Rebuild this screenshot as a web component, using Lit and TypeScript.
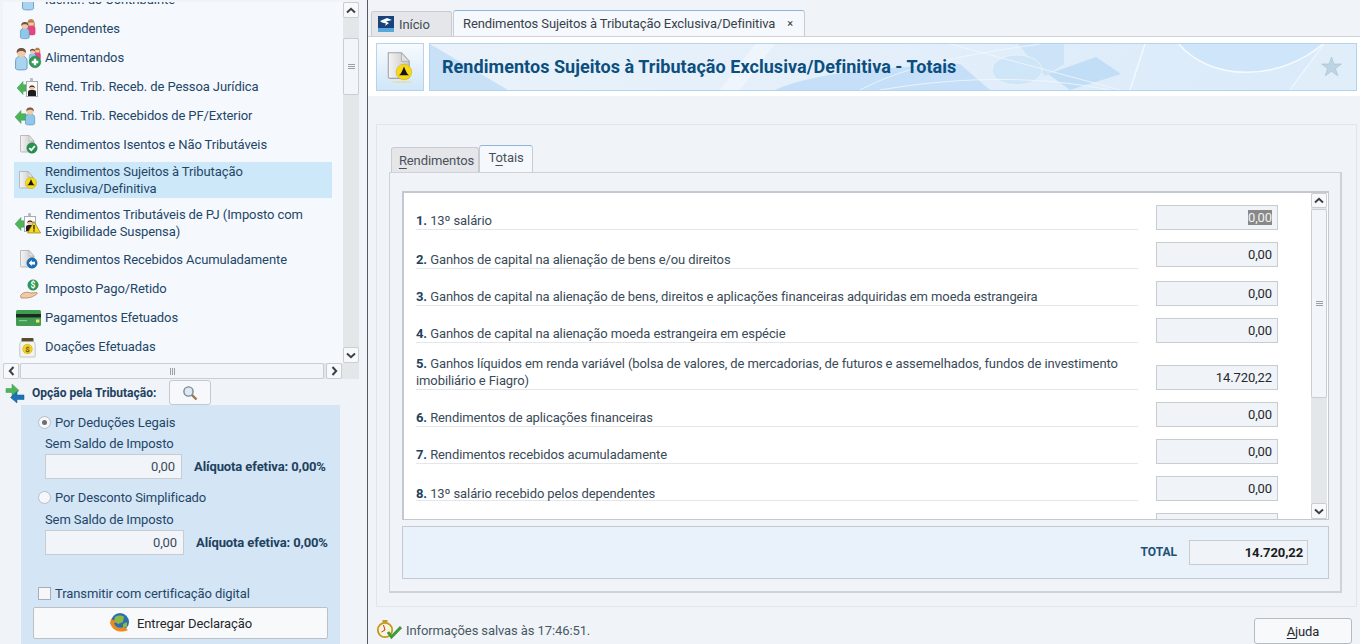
import { LitElement, html, css, svg } from "lit";
import { customElement } from "lit/decorators.js";

// --- small icon parts ---
const person = (x: number, y: number, s: number, shirt: string, hair: string) => svg`
  <g transform="translate(${x} ${y}) scale(${s})">
    <path d="M0.5 18V11.5C0.5 8.5 3 7.5 5.5 7.5S10.5 8.5 10.5 11.5V18C10.5 19 9.5 19.5 5.5 19.5S0.5 19 0.5 18Z" fill=${shirt} stroke="#4a7ea6" stroke-width=".6"/>
    <circle cx="5.5" cy="4.6" r="3.8" fill="#f3c9a5"/>
    <path d="M1.6 5C1 1.8 3 .5 5.5 .5S10 1.8 9.4 5C8.6 3.4 7 3 5.5 3S2.4 3.4 1.6 5Z" fill=${hair}/>
  </g>`;

const woman = (x: number, y: number, s: number) => svg`
  <g transform="translate(${x} ${y}) scale(${s})">
    <path d="M.5 18V11.5C.5 8.5 3 7.5 5.5 7.5S10.5 8.5 10.5 11.5V18C10.5 19 9.5 19.5 5.5 19.5S.5 19 .5 18Z" fill="#e8457f" stroke="#b53a68" stroke-width=".5"/>
    <path d="M1 9C.4 2.5 2.6 .3 5.5 .3S10.6 2.5 10 9H8.4V4H2.6V9Z" fill="#b5763f"/>
    <circle cx="5.5" cy="4.8" r="3.2" fill="#f3c9a5"/>
    <path d="M2.2 4.6C2.6 2 4 1.4 5.5 1.4S8.4 2 8.8 4.6C7 4 4 4 2.2 4.6Z" fill="#b5763f"/>
  </g>`;

const greenArrow = (x: number, y: number, w: number) => svg`
  <path d="M${x} ${y}L${x + 6} ${y - 6.5}V${y - 3.2}H${x + w}V${y + 3.2}H${x + 6}V${y + 6.5}Z" fill="#4fb35b" stroke="#3f9a4b" stroke-width=".5"/>`;

const badge = (x: number, y: number) => svg`
  <rect x=${x + 4} y=${y} width="3" height="5" rx="1" fill="#b9bdc2"/>
  <rect x=${x + .5} y=${y + 3.5} width="11" height="15" fill="#fbfbfb" stroke="#a8acb0"/>
  <path d="M${x + 2} ${y + 18}V${y + 14}C${x + 2} ${y + 12} ${x + 4} ${y + 12} ${x + 6} ${y + 12}S${x + 10} ${y + 12} ${x + 10} ${y + 14}V${y + 18}Z" fill="#1b1b1b"/>
  <circle cx=${x + 6} cy=${y + 9.5} r="2.6" fill="#f0c6a2"/>
  <path d="M${x + 3.2} ${y + 10}C${x + 2.8} ${y + 6.5} ${x + 9.2} ${y + 6.5} ${x + 8.8} ${y + 10}C${x + 7.6} ${y + 8.4} ${x + 4.4} ${y + 8.4} ${x + 3.2} ${y + 10}Z" fill="#1b1b1b"/>`;

const doc = (x: number, y: number, s = 1) => svg`
  <g transform="translate(${x} ${y}) scale(${s})">
    <defs><linearGradient id="docfill" x1="0" x2="1"><stop offset="0" stop-color="#f4f4f4"/><stop offset="1" stop-color="#c6c6c6"/></linearGradient></defs>
    <path d="M.5 .5H9L14 6V16C14 16.6 13.6 17 13 17H1.5C.9 17 .5 16.6 .5 16Z" fill="url(#docfill)" stroke="#a3a3a3" stroke-width=".7"/>
    <path d="M9 .5V6H14Z" fill="#e2e2e2" stroke="#a9a9a9" stroke-width=".5"/>
  </g>`;

const warnDot = (cx: number, cy: number, r: number) => svg`
  <circle cx=${cx} cy=${cy} r=${r} fill="#f7d916" stroke="#c7ab0c" stroke-width=".5"/>
  <path d="M${cx} ${cy - r * .72}C${cx + r * .22} ${cy - r * .2} ${cx + r * .36} ${cy + r * .3} ${cx + r * .72} ${cy + r * .42}H${cx - r * .72}C${cx - r * .36} ${cy + r * .3} ${cx - r * .22} ${cy - r * .2} ${cx} ${cy - r * .72}Z" fill="#151515"/>`;

const ic = (w: number, h: number, body: unknown) =>
  html`<svg width=${w} height=${h} viewBox="0 0 ${w} ${h}">${body}</svg>`;

const icons: Record<string, unknown> = {
  contrib: svg`${person(8, .5, 1.1, "#a8d4f2", "#7a5a42")}`,
  dep: svg`${woman(12.5, 2, .82)}${person(6, 4.5, .88, "#8fc7ec", "#6d5546")}`,
  ali: svg`${person(1, 1.5, 1.15, "#a8d4f2", "#6d5546")}${woman(20, 1.5, .62)}${person(15, 2.5, .65, "#8fc7ec", "#6d5546")}
    <circle cx="21" cy="16" r="5.8" fill="#2f9a55" stroke="#25794a" stroke-width=".5"/><path d="M19.8 12.7h2.4v2.1h2.1v2.4h-2.1v2.1h-2.4v-2.1h-2.1v-2.4h2.1Z" fill="#fff"/>`,
  pj: svg`${greenArrow(3, 13, 9)}${badge(12, 3)}`,
  pf: svg`${greenArrow(1, 13, 11)}${person(11, 3, .92, "#8fc7ec", "#7a5a42")}`,
  isentos: svg`${doc(6, 2)}<circle cx="18" cy="15" r="5.2" fill="#27914f" stroke="#1f7a41" stroke-width=".5"/><path d="M15.3 15.1l2 2.1 3.6-4.2" fill="none" stroke="#fff" stroke-width="1.8"/>`,
  exclusiva: svg`${doc(5, 3)}${warnDot(17, 15, 5.6)}`,
  suspensa: svg`${greenArrow(1, 13, 9)}${badge(10, 2)}<path d="M20 10.5L26.6 22H13.6Z" fill="#f7d916" stroke="#7a6a10" stroke-width=".6"/><path d="M19.4 14h1.2v4.4h-1.2zM19.4 19.2h1.2v1.3h-1.2z" fill="#111"/>`,
  acum: svg`${doc(6, 2)}<circle cx="18" cy="15" r="5.2" fill="#1d6fb5" stroke="#155a94" stroke-width=".5"/><path d="M14.8 15l3-3v1.8h3.2v2.6h-3.2v1.6Z" fill="#fff"/>`,
  pago: svg`<circle cx="19" cy="8" r="5.2" fill="#2f9a55" stroke="#25794a" stroke-width=".5"/><text x="19" y="11" font-size="8.5" font-weight="700" text-anchor="middle" fill="#fff" font-family="Roboto, sans-serif">$</text>
    <path d="M6.5 18.5C9 15 13 14.6 17 16L22 15.5C23.5 15.4 23.7 16.4 22.8 17C20.5 18.8 17.5 20.6 13 21H7Z" fill="#f3c9a5" stroke="#a8784f" stroke-width=".7"/>`,
  pagto: svg`<rect x="2" y="4" width="25" height="16" rx="1.5" fill="#3f9c50"/><rect x="2" y="8" width="25" height="3.4" fill="#1d2a20"/><rect x="5" y="14" width="8" height="1.2" fill="#8cc796"/><rect x="22" y="13.5" width="3.4" height="3" fill="#f1e36c"/>`,
  doacao: svg`<rect x="7.5" y="3" width="12" height="4" rx=".8" fill="#5b4a32"/><path d="M7 6.5H20C21 8 21.2 9 21.2 10.5V21C21.2 21.6 20.8 22 20.2 22H6.8C6.2 22 5.8 21.6 5.8 21V10.5C5.8 9 6 8 7 6.5Z" fill="#f4f4ef" stroke="#a5a59c" stroke-width=".6"/>
    <circle cx="13.5" cy="14" r="4.8" fill="#f2d02a" stroke="#c2a312" stroke-width=".5"/><text x="13.5" y="17" font-size="8" font-weight="700" text-anchor="middle" fill="#6b5405" font-family="Roboto, sans-serif">$</text>`,
};

const tree = [
  { icon: "contrib", lines: ["Identif. do Contribuinte"], h: 29 },
  { icon: "dep", lines: ["Dependentes"], h: 29 },
  { icon: "ali", lines: ["Alimentandos"], h: 29 },
  { icon: "pj", lines: ["Rend. Trib. Receb. de Pessoa Jurídica"], h: 29 },
  { icon: "pf", lines: ["Rend. Trib. Recebidos de PF/Exterior"], h: 29 },
  { icon: "isentos", lines: ["Rendimentos Isentos e Não Tributáveis"], h: 29 },
  { icon: "exclusiva", lines: ["Rendimentos Sujeitos à Tributação", "Exclusiva/Definitiva"], h: 36, sel: true, mt: 3, mb: 3 },
  { icon: "suspensa", lines: ["Rendimentos Tributáveis de PJ (Imposto com", "Exigibilidade Suspensa)"], h: 43, mb: 1 },
  { icon: "acum", lines: ["Rendimentos Recebidos Acumuladamente"], h: 29 },
  { icon: "pago", lines: ["Imposto Pago/Retido"], h: 29 },
  { icon: "pagto", lines: ["Pagamentos Efetuados"], h: 29 },
  { icon: "doacao", lines: ["Doações Efetuadas"], h: 29 },
];

// h = row height, lift = input raised over the row's rule, drop = text sunk towards the rule
const rows = [
  { n: "1.", lines: ["13º salário"], v: "0,00", h: 25, sel: true },
  { n: "2.", lines: ["Ganhos de capital na alienação de bens e/ou direitos"], v: "0,00", h: 27, lift: 2 },
  { n: "3.", lines: ["Ganhos de capital na alienação de bens, direitos e aplicações financeiras adquiridas em moeda estrangeira"], v: "0,00", h: 25 },
  { n: "4.", lines: ["Ganhos de capital na alienação moeda estrangeira em espécie"], v: "0,00", h: 25 },
  { n: "5.", lines: ["Ganhos líquidos em renda variável (bolsa de valores, de mercadorias, de futuros e assemelhados, fundos de investimento", "imobiliário e Fiagro)"], v: "14.720,22", h: 35 },
  { n: "6.", lines: ["Rendimentos de aplicações financeiras"], v: "0,00", h: 25 },
  { n: "7.", lines: ["Rendimentos recebidos acumuladamente"], v: "0,00", h: 25 },
  { n: "8.", lines: ["13º salário recebido pelos dependentes"], v: "0,00", h: 25, drop: 2 },
  { n: "", lines: [""], v: "", h: 25, blank: true },
];

const up = html`<svg width="10" height="7" viewBox="0 0 10 7"><path d="M1 5.5L5 1.8L9 5.5" fill="none" stroke="#3a4148" stroke-width="2"/></svg>`;
const down = html`<svg width="10" height="7" viewBox="0 0 10 7"><path d="M1 1.5L5 5.2L9 1.5" fill="none" stroke="#3a4148" stroke-width="2"/></svg>`;
const left = html`<svg width="7" height="10" viewBox="0 0 7 10"><path d="M5.5 1L1.8 5L5.5 9" fill="none" stroke="#3a4148" stroke-width="2"/></svg>`;
const right = html`<svg width="7" height="10" viewBox="0 0 7 10"><path d="M1.5 1L5.2 5L1.5 9" fill="none" stroke="#3a4148" stroke-width="2"/></svg>`;

@customElement("app-root")
export class AppRoot extends LitElement {
  static styles = css`
    :host {
      display: block;
      width: 1360px;
      height: 644px;
      overflow: hidden;
      background: #f0f4f9;
      font-family: Roboto, "Liberation Sans", sans-serif;
      font-size: 13px;
      letter-spacing: -0.1px;
      color: #3a4a58;
    }
    * { box-sizing: border-box; }
    .app { display: flex; height: 644px; }

    /* left column */
    .side { width: 367px; flex: none; display: flex; flex-direction: column; }
    .divider { width: 1px; flex: none; background: #55585c; }
    .tree-wrap { display: flex; margin: 2px 0 0 3px; width: 356px; height: 361px; }
    .tree { width: 340px; height: 361px; overflow: hidden; background: #f5f9fd; }
    .tree-inner { margin-top: -17px; }
    .item { display: flex; align-items: center; margin-left: 11px; width: 318px; color: #1f4668; line-height: 17px; }
    .item.sel { background: #cde8f8; }
    .item .ico { width: 31px; height: 24px; flex: none; display: block; }
    .item svg { display: block; overflow: visible; }

    .vbar { width: 16px; display: flex; flex-direction: column; background: #e4e7ea; }
    .sbtn {
      display: flex; align-items: center; justify-content: center;
      background: #f7f9fb; border: 1px solid #c9ced4; border-radius: 2px; flex: none;
    }
    .vbar .sbtn { width: 16px; height: 16px; }
    .vthumb {
      display: flex; align-items: center; justify-content: center; flex: none;
      background: #f2f5f9; border: 1px solid #c9ced4; border-radius: 2px; width: 16px;
    }
    .grip-h { width: 7px; height: 5px; border-top: 1px solid #9aa0a6; border-bottom: 1px solid #9aa0a6; position: relative; }
    .grip-h::after { content: ""; position: absolute; left: 0; right: 0; top: 1px; height: 1px; background: #9aa0a6; }
    .grip-v { width: 5px; height: 7px; border-left: 1px solid #9aa0a6; border-right: 1px solid #9aa0a6; position: relative; }
    .grip-v::after { content: ""; position: absolute; top: 0; bottom: 0; left: 1px; width: 1px; background: #9aa0a6; }
    .hbar { display: flex; margin-left: 3px; width: 356px; height: 16px; background: #e4e7ea; gap: 1px; }
    .hbar .sbtn { width: 16px; height: 16px; }
    .hthumb {
      flex: 1; display: flex; align-items: center; justify-content: center;
      background: #f2f5f9; border: 1px solid #c9ced4; border-radius: 2px; margin-right: 1px;
    }

    .opt-head { display: flex; align-items: center; height: 25px; padding-left: 5px; margin-top: 1px; }
    .opt-head strong { font-weight: 700; font-size: 12px; letter-spacing: 0; color: #21415e; margin-left: 7px; }
    .lupa {
      width: 42px; height: 25px; margin-left: 13px; display: flex; align-items: center; justify-content: center;
      background: #f6f8fb; border: 1px solid #c4c9cf; border-radius: 3px;
    }
    .opt {
      margin-left: 21px; width: 319px; flex: 1; background: #d4e5f5;
      display: flex; flex-direction: column; padding-top: 9px; color: #1f4668;
    }
    .radio-row { display: flex; align-items: center; gap: 4px; padding-left: 17px; height: 17px; }
    .radio { width: 13px; height: 13px; border-radius: 50%; background: #f5f7fa; border: 1px solid #b9bec4; display: flex; align-items: center; justify-content: center; }
    .radio i { width: 5px; height: 5px; border-radius: 50%; background: #6b7077; }
    .sem { padding-left: 24px; height: 17px; line-height: 17px; margin-top: 4px; }
    .val-row { display: flex; align-items: center; padding-left: 24px; margin-top: 2px; height: 25px; }
    .val {
      height: 25px; background: #f1f5fa; border: 1px solid #c8ccd1; display: flex; align-items: center;
      justify-content: flex-end; padding-right: 6px; color: #3a4a58;
    }
    .val-row b { margin-left: 12px; font-weight: 700; color: #21415e; white-space: nowrap; }
    .check-row { display: flex; align-items: center; gap: 4px; padding-left: 17px; height: 17px; margin-top: 30px; }
    .check { width: 13px; height: 13px; background: #f5f7fa; border: 1px solid #a9aeb4; }
    .send {
      margin: 5px 0 0 12px; width: 295px; height: 32px; display: flex; align-items: center; justify-content: center; gap: 6px;
      background: #f8f9fb; border: 1px solid #bcc1c7; border-radius: 2px; color: #24272a;
    }

    /* right column */
    .main { flex: 1; display: flex; flex-direction: column; min-width: 0; }
    .tabs { display: flex; height: 26px; margin-top: 11px; padding-left: 3px; border-bottom: 1px solid #cfd2d6; align-items: flex-end; }
    .tab {
      height: 26px; display: flex; align-items: center; background: #e4e6ea; border: 1px solid #c8cbcf; border-bottom: none;
      border-radius: 3px 3px 0 0; color: #444c55;
    }
    .tab.home { width: 81px; padding-left: 6px; gap: 5px; height: 25px; }
    .tab.on {
      width: 352px; margin-left: 1px; padding-left: 9px; background: #f5f9fd; border-color: #a8c4dc #c8cbcf #c8cbcf;
      border-top: 1px solid #8fb6d8; color: #3a4148;
    }
    .tab.on .x { margin-left: 12px; font-size: 11px; color: #333; }
    .head { height: 59px; background: #fff; display: flex; gap: 5px; padding: 6px 3px 5px 8px; }
    .head-ico {
      width: 48px; height: 48px; flex: none; display: flex; align-items: center; justify-content: center;
      border: 1px solid #b3d4ef; background: linear-gradient(#f7fbfe, #d0e6f8);
    }
    .banner {
      flex: 1; height: 48px; position: relative; border: 1px solid #b3d4ef; overflow: hidden;
      display: flex; align-items: center; padding: 0 0 2px 12px;
      background: linear-gradient(100deg, #e9f2fa 0%, #e4effa 45%, #d9eafa 100%);
    }
    .banner > svg.bg { position: absolute; left: 0; top: 0; }
    .banner h1 { position: relative; margin: 0; font-size: 18px; font-weight: 700; letter-spacing: 0.05px; color: #0c4f7f; }
    .banner .star { position: absolute; right: 14px; top: 12px; }

    .form-box {
      margin: 28px 3px 0 8px; height: 483px; border: 1px solid #e2e5e9; padding: 20px 14px 0 12px; flex: none;
    }
    .sub-tabs { display: flex; height: 27px; padding-left: 2px; align-items: flex-end; }
    .st {
      height: 25px; display: flex; align-items: flex-end; justify-content: center; background: #e4e6ea; border: 1px solid #c8cbcf; border-bottom: none;
      border-radius: 3px 3px 0 0; width: 88px; padding: 0 0 4px 3px; color: #4a5158; white-space: nowrap;
    }
    .st.on { height: 27px; width: 54px; background: #f5f9fd; border-top: 1px solid #8fb6d8; padding: 0 0 7px; color: #4a5158; }
    .st u { text-underline-offset: 3px; text-decoration-thickness: 1px; }
    .panel {
      width: 953px; height: 421px; border: 1px solid #cfd2d6; border-right-width: 2px; border-bottom-width: 2px;
      padding: 18px 12px 0 12px; display: flex; flex-direction: column;
    }
    .list { height: 329px; width: 927px; flex: none; display: flex; background: #fff; border: 1px solid #c3c9d0; border-top-width: 2px; border-left-width: 2px; overflow: hidden; }
    .list-body { flex: 1; padding-left: 12px; overflow: hidden; padding-top: 12px; display: flex; flex-direction: column; gap: 12px; }
    .row { display: flex; gap: 18px; flex: none; }
    .row .label {
      width: 722px; flex: none; border-bottom: 1px solid #e4e6e9; line-height: 17px; color: #3a4a58;
      display: flex; flex-direction: column; justify-content: flex-end;
    }
    .row .label b { font-weight: 700; color: #21415e; }
    .row .input {
      width: 122px; flex: none; height: 25px; align-self: flex-end; background: #f0f3f8; border: 1px solid #c9cccf;
      display: flex; align-items: center; justify-content: flex-end; padding-right: 5px; color: #26292c;
    }
    .row .input .hl { background: #888; color: #f2f2f2; }
    .row.blank .label { border: none; }
    .list-bar { width: 16px; flex: none; margin-right: 1px; }
    .list-bar .sbtn:first-child { height: 15px; }
    .list-bar .vthumb { height: 189px; margin-top: 1px; }

    .total {
      margin-top: 6px; width: 927px; height: 53px; background: #e9f1fa; border: 1px solid #c3c9d0;
      display: flex; align-items: center; justify-content: flex-end; gap: 12px; padding: 0 20px 1px 0;
    }
    .total b { font-weight: 700; font-size: 12px; letter-spacing: 0; color: #1c5075; }
    .total .box {
      width: 119px; height: 25px; border: 1px solid #c9cccf; background: #f0f3f8; display: flex; align-items: center;
      justify-content: flex-end; padding-right: 4px; font-weight: 700; color: #1a1d20; letter-spacing: -0.1px;
    }

    .foot { flex: 1; display: flex; align-items: center; padding: 9px 8px 0 8px; }
    .foot .saved { margin-left: 4px; color: #4a5863; }
    .foot .help {
      margin: 2px 0 0 auto; width: 98px; height: 26px; display: flex; align-items: center; justify-content: center;
      background: #f8f9fb; border: 1px solid #b5bac4; border-radius: 3px; color: #24272a;
    }
    .foot .help u { text-underline-offset: 2px; }
  `;

  private renderItem(it: (typeof tree)[number]) {
    return html`<div class="item ${it.sel ? "sel" : ""}" style="height:${it.h}px;margin-top:${it.mt ?? 0}px;margin-bottom:${it.mb ?? 0}px">
      <span class="ico">${ic(31, 24, icons[it.icon])}</span>
      <span>${it.lines.map((l) => html`${l}<br />`)}</span>
    </div>`;
  }

  private renderRow(r: (typeof rows)[number]) {
    return html`<div class="row ${r.blank ? "blank" : ""}" style="height:${r.h}px">
      <div class="label">
        ${r.lines.map((l, i) => html`<div style="margin-bottom:${-(r.drop ?? 0)}px">${i === 0 ? html`<b>${r.n}</b> ` : ""}${l}</div>`)}
      </div>
      <div class="input" style="margin-bottom:${r.lift ?? 0}px">${r.sel ? html`<span class="hl">${r.v}</span>` : r.v}</div>
    </div>`;
  }

  render() {
    return html`<div class="app">
      <div class="side">
        <div class="tree-wrap">
          <div class="tree"><div class="tree-inner">${tree.map((t) => this.renderItem(t))}</div></div>
          <div class="vbar">
            <div class="sbtn">${up}</div>
            <div class="vthumb" style="height:57px;margin-top:20px"><div class="grip-h"></div></div>
            <div style="flex:1"></div>
            <div class="sbtn">${down}</div>
          </div>
        </div>
        <div class="hbar">
          <div class="sbtn">${left}</div>
          <div class="hthumb"><div class="grip-v"></div></div>
          <div class="sbtn">${right}</div>
          <div style="width:16px"></div>
        </div>
        <div class="opt-head">
          ${ic(20, 20, svg`<path d="M1 5.5H7V1L14 7.5L7 14V9.5H1Z" fill="#4fb35b" stroke="#3f9a4b" stroke-width=".5"/><path d="M19 12H12V8.5L5.5 14.5L12 20V16.5H19Z" fill="#1c73b8" stroke="#155a94" stroke-width=".5"/>`)}
          <strong>Opção pela Tributação:</strong>
          <div class="lupa">${ic(16, 16, svg`<circle cx="6.5" cy="6.5" r="4.6" fill="#dbeaf5" stroke="#7a8791" stroke-width="1.4"/><path d="M10 10L14.5 14.5" stroke="#9a7a4a" stroke-width="2.4"/>`)}</div>
        </div>
        <div class="opt">
          <div class="radio-row"><span class="radio"><i></i></span>Por Deduções Legais</div>
          <div class="sem">Sem Saldo de Imposto</div>
          <div class="val-row"><div class="val" style="width:137px">0,00</div><b>Alíquota efetiva: 0,00%</b></div>
          <div class="radio-row" style="margin-top:10px"><span class="radio"></span>Por Desconto Simplificado</div>
          <div class="sem" style="margin-top:5px">Sem Saldo de Imposto</div>
          <div class="val-row"><div class="val" style="width:139px">0,00</div><b>Alíquota efetiva: 0,00%</b></div>
          <div class="check-row"><span class="check"></span>Transmitir com certificação digital</div>
          <div class="send">
            ${ic(22, 22, svg`<circle cx="11" cy="10" r="9" fill="#2c6fb0"/><path d="M6 5C9 3 13 3 15 5L14 10L9 12L5 9Z" fill="#8db845"/><path d="M14 12L18 10L18 15L14 16Z" fill="#8db845"/><path d="M1 11C3 18 11 22 19 18L15 15C10 17 6 15 5 11L8 10L2 7Z" fill="#ee8a1c"/>`)}
            Entregar Declaração
          </div>
        </div>
      </div>
      <div class="divider"></div>
      <div class="main">
        <div class="tabs">
          <div class="tab home">
            ${ic(16, 16, svg`<rect x="0" y="0" width="16" height="12" fill="#17427a"/><rect x="0" y="12" width="16" height="4" fill="#5aa7dc"/><path d="M2 5L9 2L14 4L8 5.5L11 7L7 10L8 7.5L4 6.5Z" fill="#fff"/>`)}
            Início
          </div>
          <div class="tab on">Rendimentos Sujeitos à Tributação Exclusiva/Definitiva<span class="x">×</span></div>
        </div>
        <div class="head">
          <div class="head-ico">${ic(28, 32, svg`${doc(1.5, 1, 1.55)}${warnDot(18, 21, 7.8)}<ellipse cx="16" cy="31" rx="10" ry="1" fill="#e6dc98" opacity=".7"/>`)}</div>
          <div class="banner">
            <svg class="bg" width="926" height="46" viewBox="0 0 926 46">
              <path d="M0 0L78 46H0Z" fill="#c9e1f6"/>
              <path d="M290 46L325 0H345L310 46Z" fill="#f4f9fd" opacity=".6"/>
              <path d="M345 46C380 30 440 24 530 20L560 46Z" fill="#c4dff7"/>
              <path d="M588 0H634V20L615 32Z" fill="#cde4f8"/>
              <ellipse cx="587" cy="26" rx="25" ry="15" fill="#cfe5f8" stroke="#e8f2fb"/>
              <path d="M618 30L666 13L691 30L640 46Z" fill="#c2def7"/>
              <path d="M748 -1C780 38 850 38 894 -1Z" fill="#cfe5f9" stroke="#f6fafe" stroke-width="1.5"/>
              <path d="M700 46L715 0M860 46L894 0" fill="none" stroke="#f4f9fe" stroke-width="1.5" opacity=".9"/>
              <path d="M860 46L894 0H926V46Z" fill="#e3effa" opacity=".7"/>
              <path d="M430 46C480 20 540 10 610 0M450 46C520 34 600 30 680 46M520 0L690 46" fill="none" stroke="#f2f8fd" stroke-width=".8"/>
            </svg>
            <h1>Rendimentos Sujeitos à Tributação Exclusiva/Definitiva - Totais</h1>
            <svg class="star" width="21" height="21" viewBox="0 0 21 21"><path d="M10.5 1L13 8H20.5L14.5 12.4L16.8 19.8L10.5 15.3L4.2 19.8L6.5 12.4L.5 8H8Z" fill="#bcd4e3" stroke="#a8c0cf" stroke-width=".6"/></svg>
          </div>
        </div>
        <div class="form-box">
          <div class="sub-tabs">
            <div class="st"><span><u>R</u>endimentos</span></div>
            <div class="st on"><span>T<u>o</u>tais</span></div>
          </div>
          <div class="panel">
            <div class="list">
              <div class="list-body">${rows.map((r) => this.renderRow(r))}</div>
              <div class="vbar list-bar">
                <div class="sbtn">${up}</div>
                <div class="vthumb"><div class="grip-h"></div></div>
                <div style="flex:1"></div>
                <div class="sbtn">${down}</div>
              </div>
            </div>
            <div class="total"><b>TOTAL</b><div class="box">14.720,22</div></div>
          </div>
        </div>
        <div class="foot">
          ${ic(26, 26, svg`<rect x="6.5" y="3" width="5" height="2.5" fill="#c49a1e"/><circle cx="9" cy="13" r="7.2" fill="#fbf4dd" stroke="#c49a1e" stroke-width="1.8"/><path d="M9 13L7.5 8M9 13L5.5 15" stroke="#c33" stroke-width="1"/><path d="M12 15L15.5 20L25 10" fill="none" stroke="#3f9a3a" stroke-width="3"/>`)}
          <span class="saved">Informações salvas às 17:46:51.</span>
          <div class="help"><span><u>A</u>juda</span></div>
        </div>
      </div>
    </div>`;
  }
}
